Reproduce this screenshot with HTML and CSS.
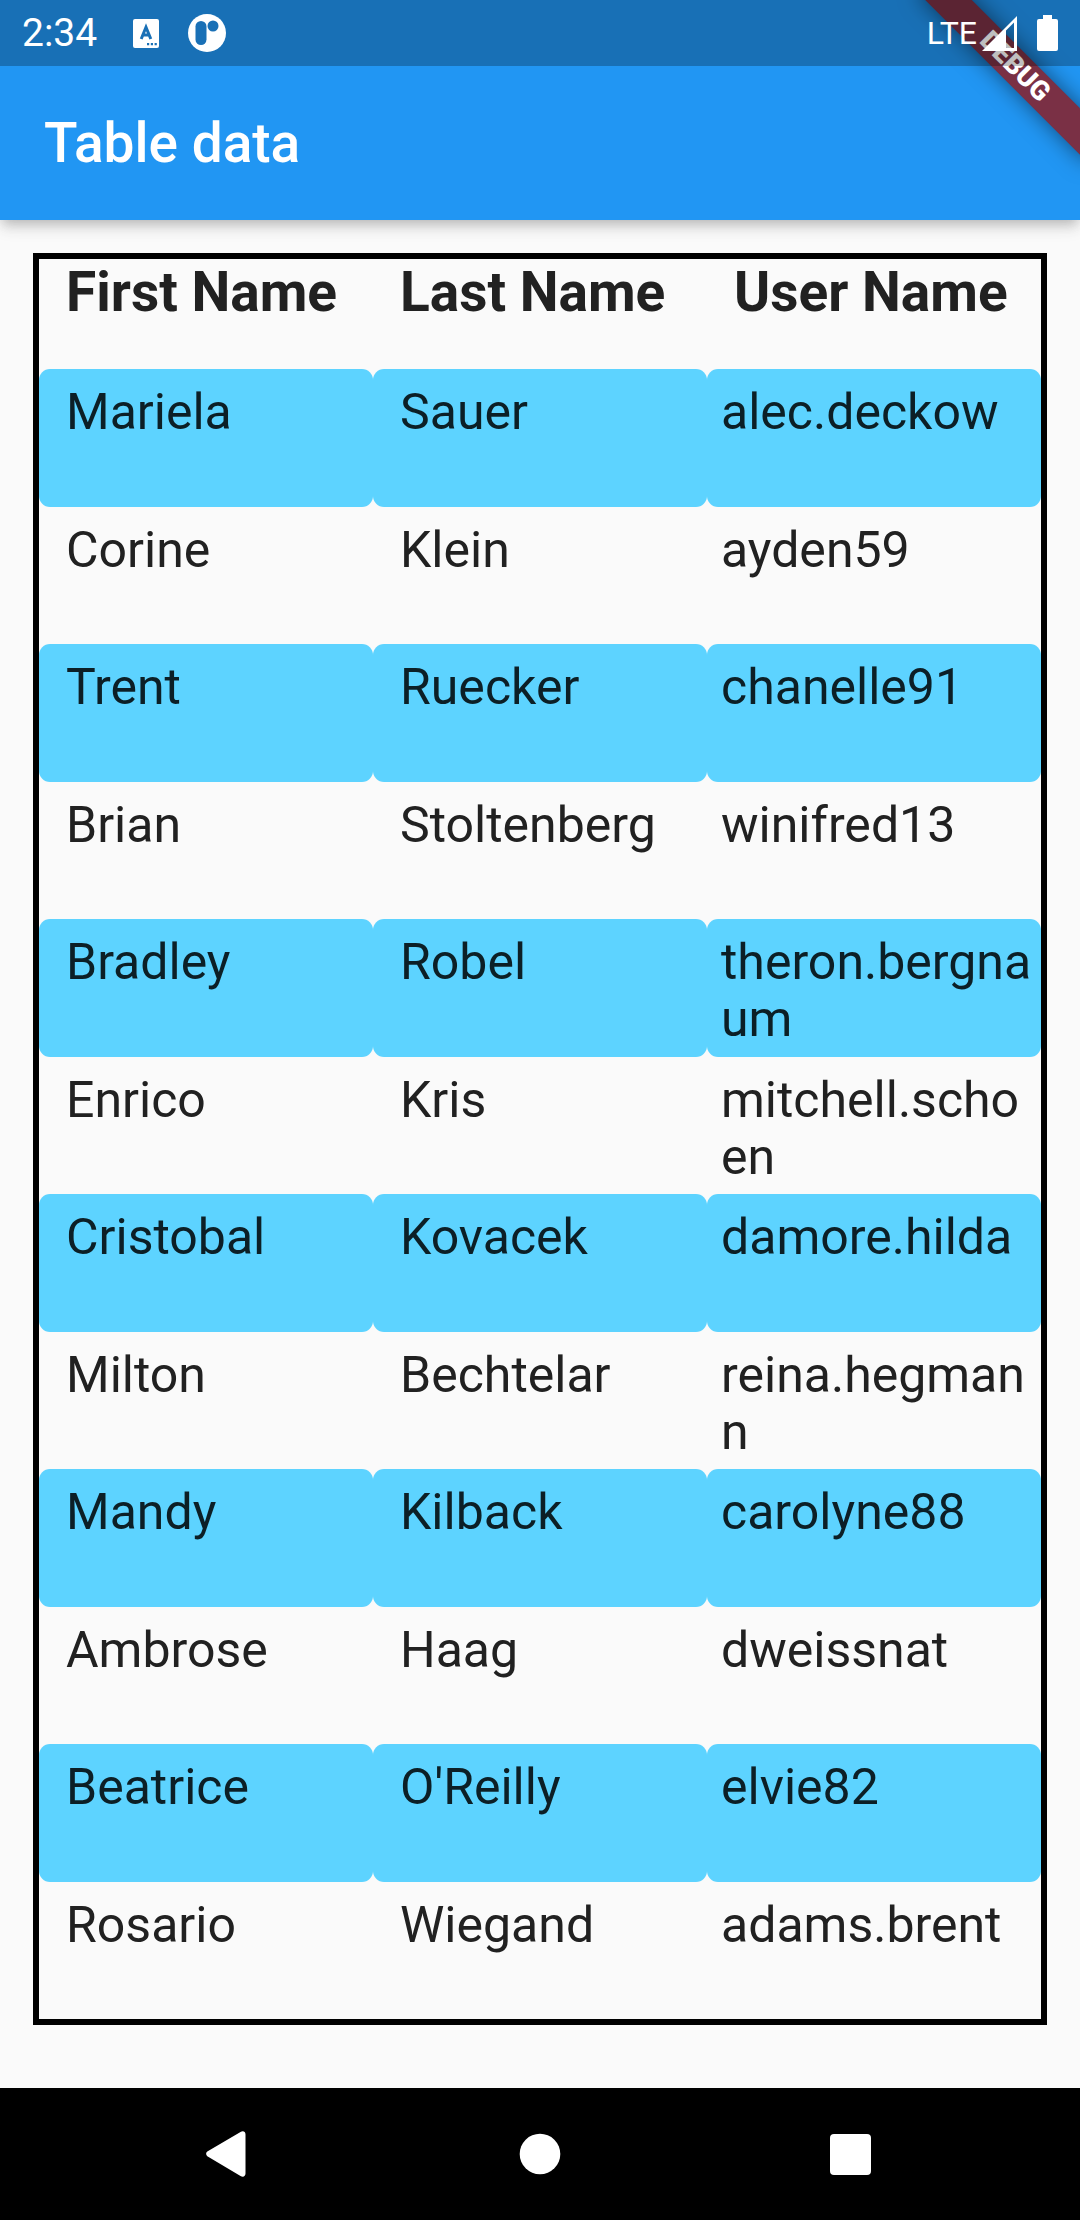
FILE: index.html
```html
<!DOCTYPE html>
<html lang="en">
<head>
<meta charset="utf-8">
<meta name="viewport" content="width=device-width, initial-scale=1">
<title>Table data</title>
<link rel="stylesheet" href="styles.css">
</head>
<body>
<header class="top">
  <div class="corner"><span class="banner">DEBUG</span></div>
  <div class="status">
    <span class="clock">2:34</span>
    <svg class="status-a" width="26" height="29" viewBox="0 0 26 29" aria-hidden="true">
      <rect width="26" height="29" rx="2" fill="#fff"/>
      <path d="M8.2 20 13 8.200 17.800 20M10 16h6" fill="none" stroke="#1970b6" stroke-width="3"/>
      <path d="M14 24h2.200v2.200H14zM17.800 24H20v2.200h-2.200zM21.600 24h2.200v2.200h-2.200z" fill="#1970b6"/>
    </svg>
    <svg class="status-p" width="38" height="38" viewBox="0 0 38 38" aria-hidden="true">
      <circle cx="19" cy="19" r="19" fill="#fff"/>
      <rect x="7.500" y="7" width="11" height="24" rx="5.500" fill="#1970b6"/>
      <circle cx="25" cy="12" r="5.500" fill="#1970b6"/>
    </svg>
    <span class="network">LTE</span>
    <svg class="signal" width="35" height="35" viewBox="0 0 35 35" aria-hidden="true">
      <path fill="#fff" fill-rule="evenodd" d="M0 35 35 0v35zM24 14.500V32h8V6.500z"/>
    </svg>
    <svg class="battery" width="21" height="36" viewBox="0 0 21 36" aria-hidden="true">
      <path fill="#fff" d="M6 0h9v4h4a2 2 0 0 1 2 2v28a2 2 0 0 1-2 2H2a2 2 0 0 1-2-2V6a2 2 0 0 1 2-2h4z"/>
    </svg>
  </div>
  <h1 class="title">Table data</h1>
</header>

<main class="content">
  <table class="people">
    <thead>
      <tr><th scope="col">First Name</th><th scope="col">Last Name</th><th scope="col">User Name</th></tr>
    </thead>
    <tbody>
      <tr><td>Mariela</td><td>Sauer</td><td class="user">alec.deckow</td></tr>
      <tr><td>Corine</td><td>Klein</td><td class="user">ayden59</td></tr>
      <tr><td>Trent</td><td>Ruecker</td><td class="user">chanelle91</td></tr>
      <tr><td>Brian</td><td>Stoltenberg</td><td class="user">winifred13</td></tr>
      <tr><td>Bradley</td><td>Robel</td><td class="user">theron.bergnaum</td></tr>
      <tr><td>Enrico</td><td>Kris</td><td class="user">mitchell.schoen</td></tr>
      <tr><td>Cristobal</td><td>Kovacek</td><td class="user">damore.hilda</td></tr>
      <tr><td>Milton</td><td>Bechtelar</td><td class="user">reina.hegmann</td></tr>
      <tr><td>Mandy</td><td>Kilback</td><td class="user">carolyne88</td></tr>
      <tr><td>Ambrose</td><td>Haag</td><td class="user">dweissnat</td></tr>
      <tr><td>Beatrice</td><td>O'Reilly</td><td class="user">elvie82</td></tr>
      <tr><td>Rosario</td><td>Wiegand</td><td class="user">adams.brent</td></tr>
    </tbody>
  </table>
</main>

<nav class="system" aria-label="System">
  <button type="button" aria-label="Back">
    <svg width="48" height="48" viewBox="0 0 48 48"><path fill="#fff" d="M1.300 26.200a3 3 0 0 1 0-4.800L34.500 2c2.500-1.500 5-.5 5 2.500v39c0 3-2.500 4-5 2.500z"/></svg>
  </button>
  <button type="button" aria-label="Home">
    <svg width="48" height="48" viewBox="0 0 48 48"><circle cx="24" cy="24" r="20.300" fill="#fff"/></svg>
  </button>
  <button type="button" aria-label="Recent apps">
    <svg width="48" height="48" viewBox="0 0 48 48"><rect x="4" y="4" width="41" height="41" rx="4" fill="#fff"/></svg>
  </button>
</nav>
</body>
</html>
```
FILE: styles.css
```css
* {
  box-sizing: border-box;
}

body {
  margin: 0;
  min-height: 100vh;
  display: flex;
  flex-direction: column;
  background: #fafafa;
  color: #212121;
  font-family: Roboto, "Noto Sans", sans-serif;
}

.top {
  position: relative;
  background: #2196f3;
  color: #fff;
  box-shadow: 0 6px 11px -3px rgba(0, 0, 0, .2), 0 11px 14px rgba(0, 0, 0, .06), 0 3px 20px rgba(0, 0, 0, .06);
}

.corner {
  position: absolute;
  top: 0;
  right: 0;
  width: 220px;
  height: 220px;
  overflow: hidden;
}

.banner {
  position: absolute;
  top: 50px;
  right: -55px;
  width: 240px;
  background: #7a3045;
  box-shadow: 0 0 22px rgba(0, 0, 0, .5);
  font-size: 27px;
  font-weight: 900;
  line-height: 33px;
  text-align: center;
  transform: rotate(45deg);
}

.status {
  position: relative;
  display: flex;
  align-items: center;
  height: 66px;
  padding: 0 22px;
  background: rgba(0, 0, 0, .25);
}

.clock {
  font-size: 39px;
}

.status-a {
  margin-left: 36px;
}

.status-p {
  margin-left: 29px;
}

.network {
  margin-left: auto;
  font-size: 32px;
}

.signal {
  margin-left: 5px;
}

.battery {
  margin-left: 20px;
}

.title {
  margin: 0;
  padding: 1px 44px 0;
  font-size: 55px;
  font-weight: 500;
  line-height: 153px;
}

.content {
  flex: 1;
  padding: 33px;
}

.people {
  width: 100%;
  table-layout: fixed;
  border: 6px solid #000;
  border-spacing: 0;
}

.people th {
  height: 110px;
  padding: 1px 0 0 27px;
  font-size: 55px;
  font-weight: 700;
  line-height: 64px;
  text-align: left;
  vertical-align: top;
  white-space: nowrap;
}

.people td {
  height: 137px;
  padding: 15px 0 0 27px;
  font-size: 50px;
  line-height: 57px;
  vertical-align: top;
}

.people tbody tr:nth-child(odd) td {
  height: 138px;
  border-radius: 11px;
  background: #5dd3ff;
  color: #0c1f26;
}

.people .user {
  padding-left: 14px;
  padding-right: 8px;
  word-break: break-all;
}

.system {
  display: grid;
  grid-template-columns: repeat(3, 1fr);
  height: 132px;
  padding: 0 7%;
  background: #000;
}

.system button {
  display: flex;
  align-items: center;
  justify-content: center;
  padding: 0;
  border: 0;
  background: none;
}
```
